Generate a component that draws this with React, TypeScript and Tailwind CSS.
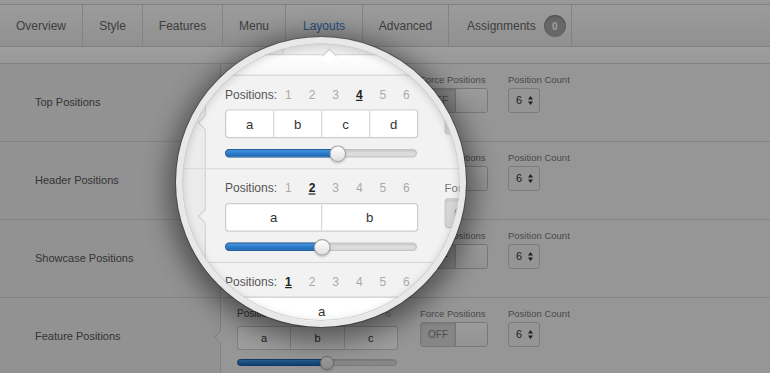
import React from 'react';

type Row = { label: string; count: number; thumb: number };

const rows: Row[] = [
  { label: 'Top Positions', count: 4, thumb: 93 },
  { label: 'Header Positions', count: 2, thumb: 80 },
  { label: 'Showcase Positions', count: 1, thumb: 72 },
  { label: 'Feature Positions', count: 3, thumb: 89 },
];

const tabs = [
  { name: 'Overview', cls: 'w-[83px] justify-center' },
  { name: 'Style', cls: 'w-[60px] justify-center' },
  { name: 'Features', cls: 'w-[80px] justify-center' },
  { name: 'Menu', cls: 'w-[63px] justify-center' },
  { name: 'Layouts', cls: 'w-[77px] justify-center', active: true },
  { name: 'Advanced', cls: 'w-[86px] justify-center' },
  { name: 'Assignments', cls: 'w-[123px] justify-start pl-[18px]', badge: '0' },
];

const letters = ['a', 'b', 'c', 'd', 'e', 'f'];

function Tabs() {
  return (
    <div>
      <div className="h-[5px] border-b border-[#d2d2d2] bg-[#f6f6f6]" />
      <div className="flex h-[42px] border-b border-[#d0d0d0] bg-linear-to-b from-[#fbfbfb] to-[#e9e9e9]">
        {tabs.map((t) => (
          <div
            key={t.name}
            className={`relative flex items-center gap-[8px] border-r border-[#d4d4d4] pt-[1px] text-[12px] ${t.cls} ${
              t.active ? 'bg-linear-to-b from-[#fdfdfd] to-[#ededed] text-[#3a85cc]' : 'text-[#666]'
            }`}
          >
            <span>{t.name}</span>
            {t.badge && (
              <span className="flex h-[22px] w-[22px] items-center justify-center rounded-full bg-[#a6a6a6] text-[10px] font-bold text-white shadow-[inset_0_1px_2px_rgba(0,0,0,0.3)]">
                {t.badge}
              </span>
            )}
            {t.active && (
              <span className="absolute bottom-[-6px] left-1/2 h-[9px] w-[9px] -translate-x-1/2 rotate-45 border-l border-t border-[#d0d0d0] bg-white" />
            )}
          </div>
        ))}
      </div>
      <div className="h-[17px] border-b border-[#d2d2d2] bg-linear-to-b from-white to-[#f6f6f6]" />
    </div>
  );
}

function Slider({ thumb }: { thumb: number }) {
  return (
    <div className="relative mt-[9px] h-[7px] w-[160px] rounded-full border border-[#c4c4c4] bg-[#dcdcdc] shadow-[inset_0_1px_1px_rgba(0,0,0,0.1)]">
      <div
        className="absolute left-[-1px] top-[-1px] h-[7px] rounded-full border border-[#1b5ea4] bg-linear-to-b from-[#3f95e2] to-[#1c67b5]"
        style={{ width: thumb + 1 }}
      />
      <div
        className="absolute top-1/2 h-[14px] w-[14px] -translate-x-1/2 -translate-y-1/2 rounded-full border border-[#a9a9a9] bg-linear-to-b from-white to-[#e0e0e0] shadow-[0_1px_2px_rgba(0,0,0,0.2)]"
        style={{ left: thumb }}
      />
    </div>
  );
}

function LayoutRow({ row }: { row: Row }) {
  return (
    <div className="flex h-[78px] border-b border-[#d4d4d4]">
      <div className="flex w-[220px] items-center bg-[#ececec] pl-[35px] text-[11px] text-[#555]">{row.label}</div>
      <div className="relative flex flex-1 items-start border-l border-[#d0d0d0] bg-[#f2f2f2] pl-[16px] pt-[10px]">
        <span className="absolute left-[-5px] top-1/2 h-[9px] w-[9px] -translate-y-1/2 rotate-45 border-b border-l border-[#d0d0d0] bg-[#f2f2f2]" />
        <div className="w-[161px]">
          <div className="flex h-[12px] items-center text-[10px] leading-[12px]">
            <span className="w-[43px] text-[#555]">Positions:</span>
            {[1, 2, 3, 4, 5, 6].map((n) => (
              <span
                key={n}
                className={`w-[20px] text-center ${n === row.count ? 'font-bold text-[#222] underline' : 'text-[#aaa]'}`}
              >
                {n}
              </span>
            ))}
          </div>
          <div className="mt-[6px] flex h-[24px] overflow-hidden rounded-[3px] border border-[#cdcdcd] bg-white">
            {letters.slice(0, row.count).map((l, i) => (
              <div
                key={l}
                className={`flex flex-1 items-center justify-center text-[11px] text-[#333] ${i > 0 ? 'border-l border-[#d6d6d6]' : ''}`}
              >
                {l}
              </div>
            ))}
          </div>
          <Slider thumb={row.thumb} />
        </div>
        <div className="ml-[22px]">
          <div className="h-[12px] text-[9.5px] leading-[12px] text-[#777]">Force Positions</div>
          <div className="mt-[2px] flex h-[25px] w-[68px] overflow-hidden rounded-[3px] border border-[#c2c2c2]">
            <div className="flex w-[34px] items-center justify-center bg-[#d8d8d8] text-[10px] text-[#808080] shadow-[inset_0_1px_2px_rgba(0,0,0,0.12)]">
              OFF
            </div>
            <div className="flex-1 border-l border-[#bdbdbd] bg-linear-to-b from-[#fbfbfb] to-[#ededed]" />
          </div>
        </div>
        <div className="ml-[20px]">
          <div className="h-[12px] text-[9.5px] leading-[12px] text-[#777]">Position Count</div>
          <div className="mt-[2px] flex h-[25px] w-[32px] items-center justify-between rounded-[3px] border border-[#c8c8c8] bg-[#f1f1f1] pl-[7px] pr-[6px] text-[11px] text-[#333]">
            <span>6</span>
            <svg width="5" height="9" viewBox="0 0 5 9">
              <path d="M2.5 0L5 3.5H0z M2.5 9L0 5.5H5z" fill="#333" />
            </svg>
          </div>
        </div>
      </div>
    </div>
  );
}

function Page() {
  return (
    <div className="w-[770px] bg-[#f2f2f2]">
      <Tabs />
      {rows.map((r) => (
        <LayoutRow key={r.label} row={r} />
      ))}
    </div>
  );
}

export default function App() {
  return (
    <div className="relative h-[373px] w-[770px] overflow-hidden font-['Liberation_Sans',Arial,sans-serif]">
      <Page />
      <div className="absolute inset-0 bg-black/[0.38]" />
      {/* magnifier */}
      <div className="absolute left-[176px] top-[37px] h-[290px] w-[290px] overflow-hidden rounded-full border-[6px] border-[#e8e8e8] bg-[#f2f2f2] shadow-[0_0_0_1px_rgba(0,0,0,0.25),0_6px_26px_8px_rgba(0,0,0,0.45)]">
        <div className="absolute left-[-182px] top-[-43px] w-[770px] origin-[297px_5px] scale-[1.2]">
          <Page />
        </div>
        <div className="absolute inset-0 rounded-full shadow-[inset_0_0_0_1px_#cfcfcf,inset_0_2px_10px_rgba(0,0,0,0.18)]" />
      </div>
    </div>
  );
}
